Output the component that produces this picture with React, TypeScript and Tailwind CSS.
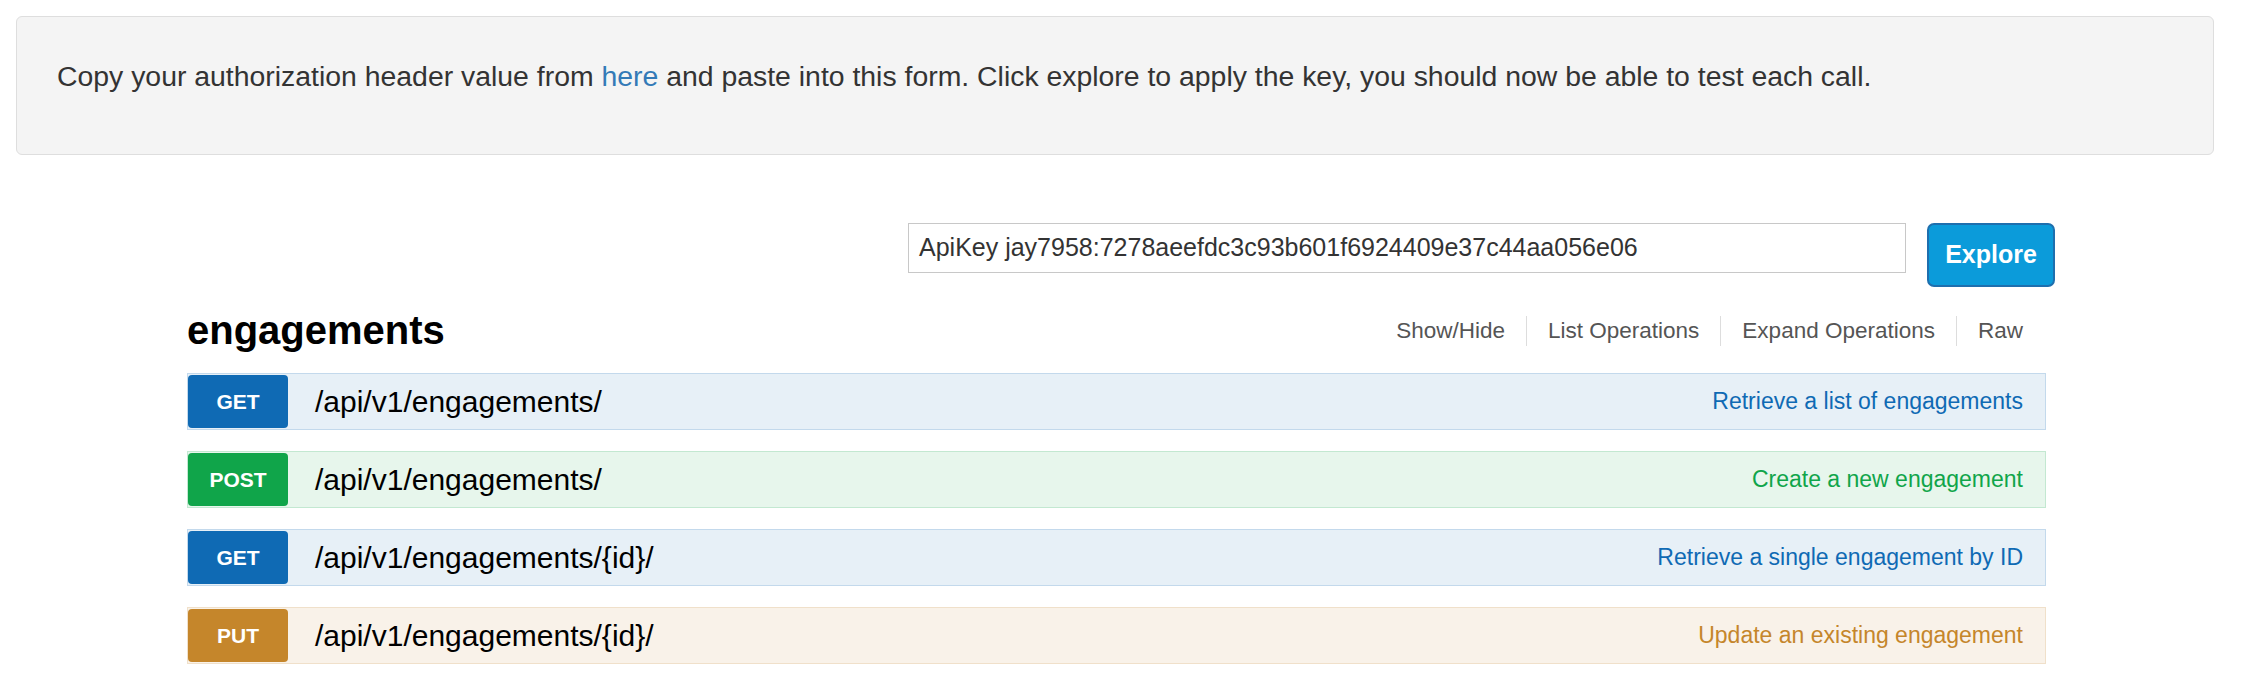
import React from "react";

const font = { fontFamily: '"Liberation Sans", Arial, Helvetica, sans-serif' };

type Op = {
  method: string;
  path: string;
  desc: string;
  row: string;
  badge: string;
  text: string;
};

const ops: Op[] = [
  {
    method: "GET",
    path: "/api/v1/engagements/",
    desc: "Retrieve a list of engagements",
    row: "bg-[#e7f0f7] border-[#c3d9ec]",
    badge: "bg-[#0f6ab4]",
    text: "text-[#0f6ab4]",
  },
  {
    method: "POST",
    path: "/api/v1/engagements/",
    desc: "Create a new engagement",
    row: "bg-[#e7f6ec] border-[#c3e8d1]",
    badge: "bg-[#10a54a]",
    text: "text-[#10a54a]",
  },
  {
    method: "GET",
    path: "/api/v1/engagements/{id}/",
    desc: "Retrieve a single engagement by ID",
    row: "bg-[#e7f0f7] border-[#c3d9ec]",
    badge: "bg-[#0f6ab4]",
    text: "text-[#0f6ab4]",
  },
  {
    method: "PUT",
    path: "/api/v1/engagements/{id}/",
    desc: "Update an existing engagement",
    row: "bg-[#f9f2e9] border-[#f0e0ca]",
    badge: "bg-[#c5862b]",
    text: "text-[#c5862b]",
  },
];

export default function App() {
  return (
    <div className="w-[2242px] h-[682px] bg-white overflow-hidden" style={font}>
      <div className="pt-[16px] px-[16px]">
        <div className="h-[139px] w-[2198px] rounded-[6px] border border-[#dedede] bg-[#f4f4f4] pt-[41px] pl-[40px] text-[28.4px] leading-[36px] text-[#333]">
          Copy your authorization header value from{" "}
          <a className="text-[#337ab7]">here</a> and paste into this form. Click explore to apply the key, you should now be able to test each call.
        </div>
      </div>

      <div className="mt-[68px] flex justify-end items-start pr-[187px] gap-[21px]">
        <div className="w-[998px] h-[50px] border border-[#c8c8c8] bg-white flex items-center pl-[10px] text-[25px] text-[#333]">
          ApiKey jay7958:7278aeefdc3c93b601f6924409e37c44aa056e06
        </div>
        <button className="w-[128px] h-[64px] rounded-[7px] border-2 border-[#1e6fae] bg-[#0b9bda] text-white font-bold text-[25px] flex items-center justify-center">
          Explore
        </button>
      </div>

      <div className="ml-[187px] w-[1859px]">
        <div className="mt-[13px] h-[60px] flex items-center justify-between">
          <h2 className="text-[40px] font-bold text-black leading-none">engagements</h2>
          <div className="flex items-center text-[22.5px] text-[#555] pr-[23px] pt-[2px]">
            <span>Show/Hide</span>
            <span className="mx-[21px] w-px h-[30px] bg-[#dddddd]" />
            <span>List Operations</span>
            <span className="mx-[21px] w-px h-[30px] bg-[#dddddd]" />
            <span>Expand Operations</span>
            <span className="mx-[21px] w-px h-[30px] bg-[#dddddd]" />
            <span>Raw</span>
          </div>
        </div>

        <div className="mt-[13px] flex flex-col gap-[21px]">
          {ops.map((op, i) => (
            <div
              key={i}
              className={`h-[57px] border flex items-center ${op.row}`}
            >
              <div
                className={`w-[100px] h-[53px] rounded-[4px] ${op.badge} text-white font-bold text-[21px] flex items-center justify-center`}
              >
                {op.method}
              </div>
              <div className="ml-[27px] text-[30px] text-black flex-1">{op.path}</div>
              <div className={`pr-[22px] text-[23px] ${op.text}`}>{op.desc}</div>
            </div>
          ))}
        </div>
      </div>
    </div>
  );
}
